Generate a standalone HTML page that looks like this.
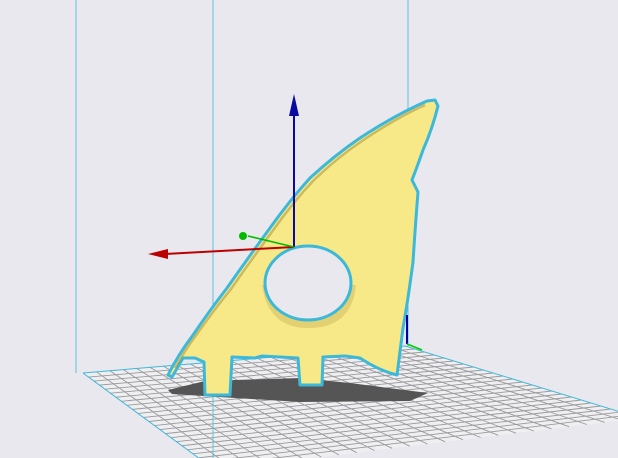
<!DOCTYPE html>
<html><head><meta charset="utf-8"><style>
html,body{margin:0;padding:0;background:#e8e8ee;overflow:hidden}
svg{display:block}
</style></head><body>
<svg id="s" width="618" height="458" viewBox="0 0 618 458" xmlns="http://www.w3.org/2000/svg">
<rect width="618" height="458" fill="#e8e8ee"/>
<polygon points="83,373 405,346 640,418 215,470" fill="#efeff1"/>
<g id="grid" stroke="#9a9a9e" stroke-width="0.9"></g>
<polyline points="83,373 405,346 640,418" fill="none" stroke="#3fb8d8" stroke-width="1"/>
<line x1="83" y1="373" x2="215" y2="470" stroke="#3fb8d8" stroke-width="1"/>
<line x1="76" y1="0" x2="76" y2="373" stroke="#5cc4de" stroke-width="1"/>
<line x1="213" y1="0" x2="213" y2="458" stroke="#5cc4de" stroke-width="1"/>
<line x1="408" y1="0" x2="408" y2="346" stroke="#5cc4de" stroke-width="1"/>
<polygon points="168,390 205,381 300,378 350,383 428,393 410,401 300,402 172,394" fill="#555"/>
<path d="M435,100 L438,106 Q432,130 423,150 Q416,170 412,180 L418,192 Q415,230 413,262 Q408,300 403,328 L397,375 L390,373 Q375,368 360,358 L345,356 L323,357 L322,385 L300,385 L298,358 L262,356 L255,358 L232,357 L230,395 L205,395 L204,362 L195,358 L183,358 L172,377 L168,375 Q178,355 193,335 Q210,310 227,288 Q248,258 270,228 Q290,200 310,178 Q335,155 360,138 Q395,115 427,101 Z" fill="#f7e987" stroke="#3cb8d8" stroke-width="3" stroke-linejoin="round"/>
<path d="M175,368 Q185,350 197,334 Q214,310 231,289 Q252,259 274,229 Q294,201 314,180 Q338,157 362,141 Q396,118 425,105" fill="none" stroke="#a8933f" stroke-width="2.5" opacity="0.55"/>
<path d="M262,285 Q268,328 308,328 Q352,328 356,285" fill="#d9c56a" opacity="0.7"/>
<ellipse cx="308" cy="283" rx="43" ry="37" fill="#e8e8ee" stroke="#3cb8d8" stroke-width="3"/>
<line x1="407" y1="315" x2="407" y2="344" stroke="#00a" stroke-width="2"/>
<line x1="407" y1="344" x2="422" y2="350" stroke="#0c0" stroke-width="1.5"/>
<line x1="294" y1="247" x2="294" y2="110" stroke="#0a0aa0" stroke-width="2"/>
<polygon points="294,94 289,116 299,116" fill="#0a0aa0"/>
<line x1="294" y1="247" x2="165" y2="254" stroke="#b00" stroke-width="2"/>
<polygon points="148,254 168,249 168,259" fill="#b00"/>
<line x1="294" y1="247" x2="248" y2="236" stroke="#0b0" stroke-width="1.5"/>
<circle cx="243" cy="236" r="4" fill="#0b0"/>
</svg>
<script>
var g=document.getElementById('grid'),A=[83,373],B=[405,346],C=[640,418],D=[215,470],N=24;
function P(u,v){var x=(1-u)*(1-v)*A[0]+u*(1-v)*B[0]+u*v*C[0]+(1-u)*v*D[0];var y=(1-u)*(1-v)*A[1]+u*(1-v)*B[1]+u*v*C[1]+(1-u)*v*D[1];return [x,y];}
var h='';for(var i=1;i<N;i++){var t=i/N;var p=P(t,0),q=P(t,1);h+='<line x1="'+p[0]+'" y1="'+p[1]+'" x2="'+q[0]+'" y2="'+q[1]+'"/>';p=P(0,t);q=P(1,t);h+='<line x1="'+p[0]+'" y1="'+p[1]+'" x2="'+q[0]+'" y2="'+q[1]+'"/>';}
g.innerHTML=h;
</script>
</body></html>
